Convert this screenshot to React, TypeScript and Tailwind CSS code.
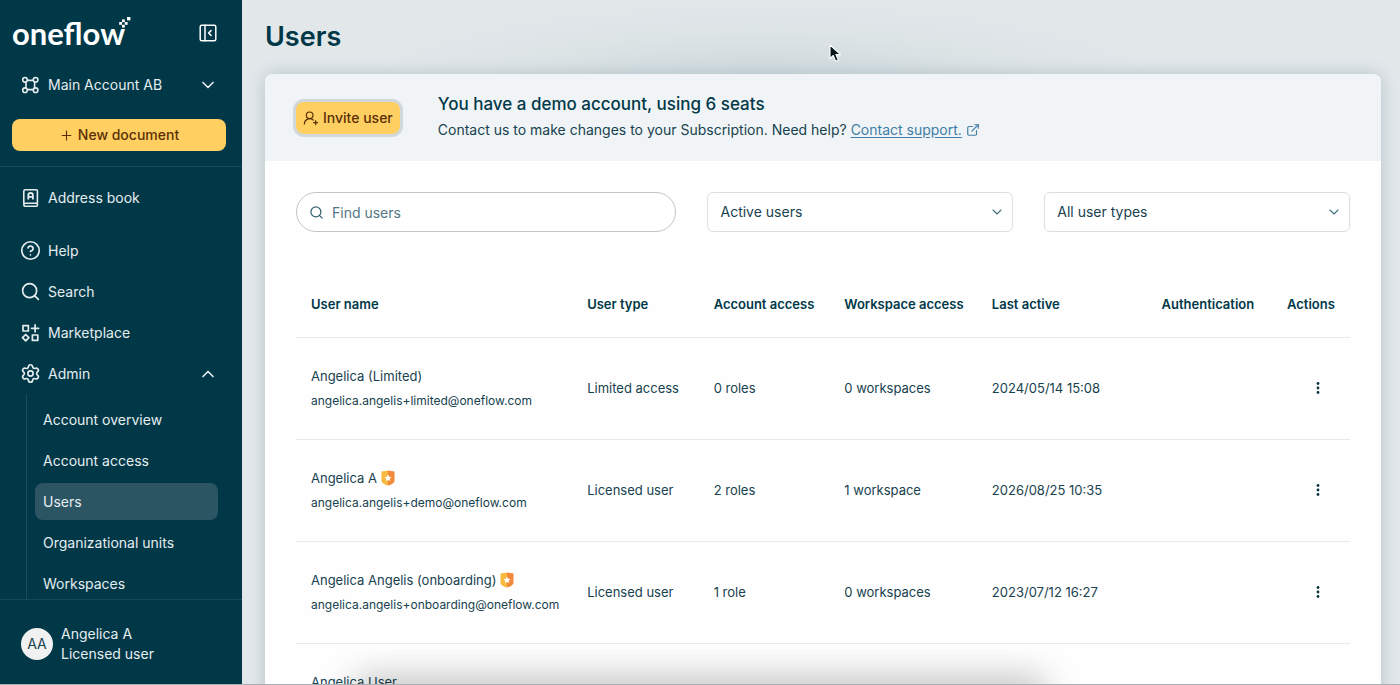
import { useState } from 'react'
import {
  ChevronDown,
  ChevronUp,
  CircleQuestionMark,
  ExternalLink,
  Plus,
  Search,
  Settings,
  UserRoundPlus,
} from 'lucide-react'

interface User {
  name: string
  email: string
  type: string
  roles: string
  workspaces: string
  lastActive: string
  isAdmin?: boolean
}

const users: User[] = [
  {
    name: 'Angelica (Limited)',
    email: 'angelica.angelis+limited@oneflow.com',
    type: 'Limited access',
    roles: '0 roles',
    workspaces: '0 workspaces',
    lastActive: '2024/05/14 15:08',
  },
  {
    name: 'Angelica A',
    email: 'angelica.angelis+demo@oneflow.com',
    type: 'Licensed user',
    roles: '2 roles',
    workspaces: '1 workspace',
    lastActive: '2026/08/25 10:35',
    isAdmin: true,
  },
  {
    name: 'Angelica Angelis (onboarding)',
    email: 'angelica.angelis+onboarding@oneflow.com',
    type: 'Licensed user',
    roles: '1 role',
    workspaces: '0 workspaces',
    lastActive: '2023/07/12 16:27',
    isAdmin: true,
  },
  {
    name: 'Angelica User',
    email: '',
    type: '',
    roles: '',
    workspaces: '',
    lastActive: '',
  },
]

const adminLinks = ['Account overview', 'Account access', 'Users', 'Organizational units', 'Workspaces']

function Logo() {
  return (
    <a href="#" className="flex items-start text-white">
      <span className="font-['Lato',sans-serif] text-[31px] leading-8 font-bold">oneflow</span>
      <svg width="14" height="14" viewBox="0 0 14 14" fill="currentColor" className="-ml-2">
        <rect x="10" y="0" width="3.4" height="3.4" />
        <rect x="5" y="2.4" width="2.8" height="2.8" />
        <rect x="7.8" y="5" width="2.8" height="2.8" />
        <rect x="2.2" y="5" width="2.8" height="2.8" />
        <rect x="5" y="7.8" width="2.8" height="2.8" />
      </svg>
    </a>
  )
}

function CollapseIcon() {
  return (
    <svg width="18" height="18" viewBox="0 0 18 18" fill="none" stroke="currentColor" strokeWidth="1.5" strokeLinejoin="round" strokeLinecap="round">
      <rect x="1.2" y="1.2" width="15.6" height="15.6" rx="1.5" />
      <path d="M6 1.2v15.6M12 6.6 9.6 9l2.4 2.4" />
    </svg>
  )
}

function AccountIcon() {
  return (
    <svg width="20" height="20" viewBox="0 0 20 20" fill="none" stroke="currentColor" strokeWidth="1.6">
      <circle cx="5" cy="4.8" r="2.3" />
      <circle cx="15.6" cy="4.8" r="2.3" />
      <circle cx="5" cy="15.2" r="2.3" />
      <circle cx="15.6" cy="15.2" r="2.3" />
      <path d="M7.2 5.4h6.2M7.2 14.6h6.2M6 6.900v6.200M14.600 6.900v6.200" />
    </svg>
  )
}

function AddressBookIcon() {
  return (
    <svg width="20" height="20" viewBox="0 0 20 20" fill="none" stroke="currentColor" strokeWidth="1.6" strokeLinejoin="round">
      <path d="M3.800 15.800V3.200c0-.9.700-1.500 1.500-1.500h11.100c.6 0 1 .4 1 1v14.600c0 .6-.4 1-1 1H5.500c-1 0-1.700-.6-1.700-1.500s.7-1.600 1.700-1.600h11.900" />
      <path d="M8.300 11.600V7.200c0-1.400 1-2.200 2.300-2.200s2.300.8 2.300 2.200v4.400M8.300 8.900h4.600" strokeWidth="1.8" />
    </svg>
  )
}

function MarketplaceIcon() {
  return (
    <svg width="20" height="20" viewBox="0 0 20 20" fill="none" stroke="currentColor" strokeWidth="1.7" strokeLinejoin="round" strokeLinecap="round">
      <rect x="3" y="2.600" width="5.400" height="5.400" />
      <rect x="12.400" y="12" width="5.400" height="5.400" />
      <path d="M15.100 1.800v7M11.600 5.300h7" />
      <path d="M5.700 11.500 8.900 14.700 5.700 17.900 2.500 14.700Z" />
    </svg>
  )
}

function AdminBadge() {
  return (
    <svg width="14" height="16" viewBox="0 0 14 16">
      <path d="M.5 1.6 7 .4v15.2C3.2 14.6.5 12.800.5 10.800Z" fill="#f9b83f" />
      <path d="M13.500 1.600 7 .4v15.200c3.800-1 6.500-2.800 6.500-4.800Z" fill="#f28a3c" />
      <path d="m7 4.500 1.100 2.200 2.400.3-1.800 1.700.5 2.400L7 9.900l-2.200 1.200.5-2.400L3.500 7l2.400-.3Z" fill="#fff" />
    </svg>
  )
}

function FilterSelect({ label, options }: { label: string; options: string[] }) {
  return (
    <div className="relative flex-1">
      <select
        aria-label={label}
        className="h-10 w-full appearance-none rounded-md border border-[#d9e0e3] bg-white px-3 text-sm text-[#17424f]"
      >
        {options.map((option) => (
          <option key={option}>{option}</option>
        ))}
      </select>
      <ChevronDown size={16} strokeWidth={1.6} className="pointer-events-none absolute top-3 right-2 text-[#43707e]" />
    </div>
  )
}

function Sidebar({ active, onSelect }: { active: string; onSelect: (name: string) => void }) {
  const [adminOpen, setAdminOpen] = useState(true)
  const itemClass = 'flex h-[41px] items-center gap-2 pl-5'

  return (
    <aside className="flex w-[242px] shrink-0 flex-col bg-[#003848] text-sm text-[#e6edef]">
      <div className="border-b border-[#164a59] pr-4 pb-[15px] pl-3">
        <div className="flex h-[66px] items-center justify-between pr-[9px]">
          <Logo />
          <button aria-label="Collapse menu" className="text-white">
            <CollapseIcon />
          </button>
        </div>
        <button className="flex h-[38px] w-full items-center gap-2 px-2">
          <AccountIcon />
          <span className="flex-1 text-left">Main Account AB</span>
          <ChevronDown size={20} />
        </button>
        <button className="mt-[15px] flex h-8 w-full items-center justify-center gap-1 rounded-lg bg-[#ffcf62] font-medium text-[#5a3005]">
          <Plus size={15} strokeWidth={1.8} />
          New document
        </button>
      </div>

      <nav className="min-h-0 flex-1 overflow-hidden pt-[10px]">
        <a href="#" className={itemClass}>
          <AddressBookIcon />
          Address book
        </a>
        <div className="mt-3">
          <a href="#" className={itemClass}>
            <CircleQuestionMark size={21} strokeWidth={1.9} className="-mr-px" />
            Help
          </a>
          <a href="#" className={itemClass}>
            <Search size={21} strokeWidth={1.9} className="-mr-px" />
            Search
          </a>
          <a href="#" className={itemClass}>
            <MarketplaceIcon />
            Marketplace
          </a>
          <button className={`${itemClass} w-full pr-6`} onClick={() => setAdminOpen(!adminOpen)}>
            <Settings size={21} strokeWidth={1.9} className="-mr-px" />
            <span className="flex-1 text-left">Admin</span>
            {adminOpen ? <ChevronUp size={20} /> : <ChevronDown size={20} />}
          </button>
        </div>
        {adminOpen && (
          <div className="ml-[26px] flex flex-col gap-1 border-l border-[#1b4c5b] pt-[7px] pr-6 pb-4 pl-2">
            {adminLinks.map((name) => (
              <a
                key={name}
                href="#"
                onClick={() => onSelect(name)}
                className={`flex h-[37px] items-center rounded-lg px-2 ${name === active ? 'bg-[#2c5564]' : ''}`}
              >
                {name}
              </a>
            ))}
          </div>
        )}
      </nav>

      <div className="flex h-[86px] items-center gap-2 border-t border-[#164a59] pt-0.5 pl-[21px]">
        <div className="flex size-8 items-center justify-center rounded-full bg-[#f1f1f1] text-[#17424f]">AA</div>
        <div className="leading-5">
          <p>Angelica A</p>
          <p>Licensed user</p>
        </div>
      </div>
    </aside>
  )
}

function UserRow({ user }: { user: User }) {
  return (
    <tr className="h-[102px] border-t border-[#e6eaeb]">
      <td className="px-[15px] pt-0.5">
        <div className="flex items-center gap-1 leading-6">
          {user.name}
          {user.isAdmin && <AdminBadge />}
        </div>
        <div className="h-[26px] text-xs leading-[26px]">{user.email}</div>
      </td>
      <td className="px-[15px]">{user.type}</td>
      <td className="px-[15px]">{user.roles}</td>
      <td className="px-[15px]">{user.workspaces}</td>
      <td className="px-[15px]">{user.lastActive}</td>
      <td />
      <td className="pr-[22px] text-right">
        <button aria-label={`Actions for ${user.name}`} className="inline-flex size-5 items-center justify-center align-middle">
          <svg width="4" height="14" viewBox="0 0 4 14" fill="#0b3443">
            <circle cx="2" cy="2.500" r="1.400" />
            <circle cx="2" cy="7" r="1.400" />
            <circle cx="2" cy="11.500" r="1.400" />
          </svg>
        </button>
      </td>
    </tr>
  )
}

export default function App() {
  const [active, setActive] = useState('Users')
  const [query, setQuery] = useState('')
  const visible = users.filter((user) => user.name.toLowerCase().includes(query.toLowerCase()))

  return (
    <div className="relative flex h-screen overflow-hidden bg-[#e2e7ea] font-['Inter','Noto_Sans',sans-serif] text-sm text-[#17424f]">
      <Sidebar active={active} onSelect={setActive} />

      <main className="min-w-0 flex-1 bg-[radial-gradient(ellipse_420px_90px_at_45%_90px,#c8d4d9_0%,#dde4e6_65%,#e2e7ea_100%)] pr-[19px] pl-[23px]">
        <h1 className="flex h-[74px] items-center text-[27px] font-semibold text-[#003848]">Users</h1>

        <section className="rounded-t-lg bg-[#fefefe] shadow-[0_0_16px_#b4c3c9]">
          <div className="flex h-[87px] items-center rounded-t-lg bg-[#f0f4f6] px-[31px]">
            <button className="flex h-8 items-center gap-1 rounded-lg bg-[#ffcf62] px-[7px] font-medium whitespace-nowrap text-[#5a3005] ring-3 ring-[#d0d8dc]">
              <UserRoundPlus size={16} strokeWidth={1.8} />
              Invite user
            </button>
            <div className="ml-[38px] pb-[3px]">
              <h2 className="text-[17px] leading-7 font-medium text-[#003848]">You have a demo account, using 6 seats</h2>
              <p className="flex items-center leading-6">
                Contact us to make changes to your Subscription. Need help?
                <a href="#" className="ml-1 flex items-center gap-1 text-[#3e7da6]">
                  <span className="underline underline-offset-2">Contact support.</span>
                  <ExternalLink size={14} />
                </a>
              </p>
            </div>
          </div>

          <div className="px-[31px] pt-[31px]">
            <div className="flex gap-[31px]">
              <label className="flex h-10 w-[36.1%] items-center gap-2 rounded-full border border-[#bfc7ca] bg-white px-3">
                <Search size={15} className="text-[#33606f]" />
                <span className="sr-only">Find users</span>
                <input
                  type="text"
                  value={query}
                  onChange={(e) => setQuery(e.target.value)}
                  placeholder="Find users"
                  className="h-full min-w-0 flex-1 text-sm outline-none placeholder:text-[#527784]"
                />
              </label>
              <FilterSelect label="User status" options={['Active users', 'Inactive users']} />
              <FilterSelect label="User type" options={['All user types', 'Licensed user', 'Limited access']} />
            </div>

            <table className="mt-10 w-full table-fixed border-collapse text-left whitespace-nowrap">
              <colgroup>
                <col className="w-[26.2%]" />
                <col className="w-[12%]" />
                <col className="w-[12.4%]" />
                <col className="w-[14%]" />
                <col className="w-[16.1%]" />
                <col className="w-[11.9%]" />
                <col className="w-[7.4%]" />
              </colgroup>
              <thead>
                <tr className="h-[65px] text-[13px] text-[#003848]">
                  <th className="px-[15px] font-semibold">User name</th>
                  <th className="px-[15px] font-semibold">User type</th>
                  <th className="px-[15px] font-semibold">Account access</th>
                  <th className="px-[15px] font-semibold">Workspace access</th>
                  <th className="px-[15px] font-semibold">Last active</th>
                  <th className="px-[15px] font-semibold">Authentication</th>
                  <th className="pl-[15px] font-semibold">Actions</th>
                </tr>
              </thead>
              <tbody className="text-[13px]">
                {visible.map((user) => (
                  <UserRow key={user.name} user={user} />
                ))}
              </tbody>
            </table>
          </div>
        </section>
      </main>

      {/* Soft shade along the bottom edge */}
      <div className="pointer-events-none absolute right-0 bottom-0 left-0 h-9 overflow-hidden border-b border-[#a9afb1]">
        <div className="mx-auto mt-6 h-12 w-[50%] rounded-full bg-black/20 blur-lg" />
      </div>

      {/* Mouse pointer */}
      <svg width="13" height="19" viewBox="0 0 13 19" className="pointer-events-none absolute top-[44px] left-[829px]">
        <path d="M1 1v13.500l3.300-3 2.400 5.700 2.600-1.100-2.400-5.500h4.700Z" fill="#04151c" stroke="#fff" strokeWidth="1.100" strokeLinejoin="round" />
      </svg>
    </div>
  )
}
